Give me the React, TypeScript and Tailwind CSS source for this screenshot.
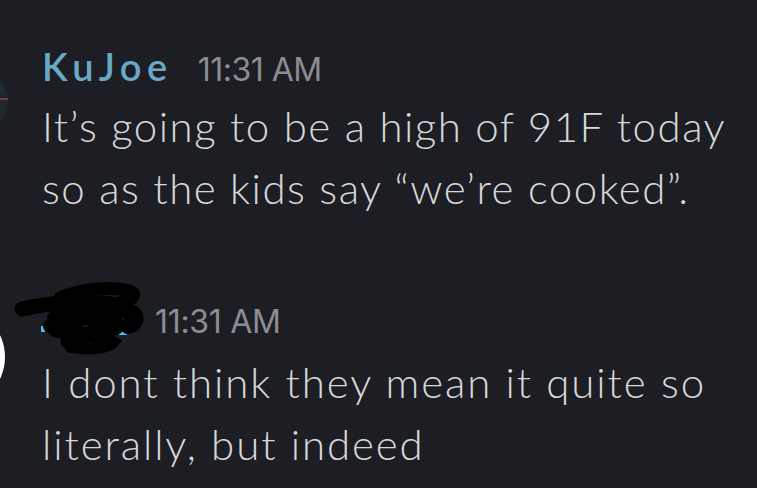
import React from "react";

export default function App() {
  return (
    <div className="relative w-[757px] h-[488px] overflow-hidden bg-[#1d1e23]" style={{ fontFamily: "Lato, 'Noto Sans', sans-serif" }}>
      {/* partial avatar of first message */}
      <div className="absolute left-[-54px] top-[70px] w-[62px] h-[62px] rounded-full bg-[#1f2830]">
        <div className="absolute right-[0px] top-[28px] w-[8px] h-[2px] bg-[#7a3838]" />
      </div>
      {/* partial avatar of second message */}
      <div className="absolute left-[-95px] top-[307px] w-[100px] h-[100px] rounded-full bg-white" />

      <div className="flex flex-col pl-[42px] pt-[40px]">
        <div className="flex items-baseline h-[55px] leading-[52px]">
          <span className="text-[38px] leading-[52px] font-semibold tracking-[5.5px] text-[#6aa8c8]">KuJoe</span>
          <span className="ml-[25px] text-[32px] leading-[52px] tracking-[-0.5px] text-[#8b8d94]" style={{ fontFamily: "Inter, sans-serif" }}>11:31 AM</span>
        </div>
        <p className="text-[42px] leading-[62px] font-light tracking-[1.5px] text-[#d7d8dc] w-[705px]">
          It’s going to be a high of 91F today so as the kids say “we’re cooked”.
        </p>

        <div className="flex items-baseline h-[55px] mt-[77px] leading-[52px]">
          <span className="w-[113px] text-[37px] leading-[52px]"> </span>
          <span className="text-[32px] leading-[52px] tracking-[-0.3px] text-[#8b8d94]" style={{ fontFamily: "Inter, sans-serif" }}>11:31 AM</span>
        </div>
        <p className="text-[42px] leading-[62px] font-light tracking-[1.9px] text-[#d7d8dc] w-[705px]">
          I dont think they mean it quite so literally, but indeed
        </p>
      </div>

      {/* scribbled-out username */}
      <svg className="absolute left-0 top-[280px]" width="160" height="90" viewBox="0 280 160 90">
        <rect x="41" y="326" width="4" height="6" fill="#4fb8ec" />
        <rect x="119" y="327" width="8" height="8" fill="#4fb8ec" />
        <path d="M22 309 C38 305, 58 303, 78 302" stroke="#000" strokeWidth="15" fill="none" strokeLinecap="round" />
        <path d="M60 298 C82 289, 110 286, 130 291 C140 296, 128 303, 105 305 C85 307, 70 305, 62 300" stroke="#000" strokeWidth="13" fill="none" strokeLinecap="round" />
        <path d="M55 318 C70 310, 100 308, 122 310 C138 312, 140 322, 128 326" stroke="#000" strokeWidth="16" fill="none" strokeLinecap="round" />
        <path d="M50 326 C60 318, 95 316, 115 320" stroke="#000" strokeWidth="14" fill="none" strokeLinecap="round" />
        <path d="M55 330 C75 336, 100 334, 116 328" stroke="#000" strokeWidth="14" fill="none" strokeLinecap="round" />
        <path d="M66 342 C80 336, 105 336, 114 342 C108 350, 85 350, 70 347" stroke="#000" strokeWidth="11" fill="none" strokeLinecap="round" />
        <path d="M88 304 C105 300, 122 304, 132 314" stroke="#000" strokeWidth="14" fill="none" strokeLinecap="round" />
        <path d="M70 308 L75 325 M95 306 L96 338" stroke="#000" strokeWidth="14" fill="none" strokeLinecap="round" />
      </svg>
    </div>
  );
}
